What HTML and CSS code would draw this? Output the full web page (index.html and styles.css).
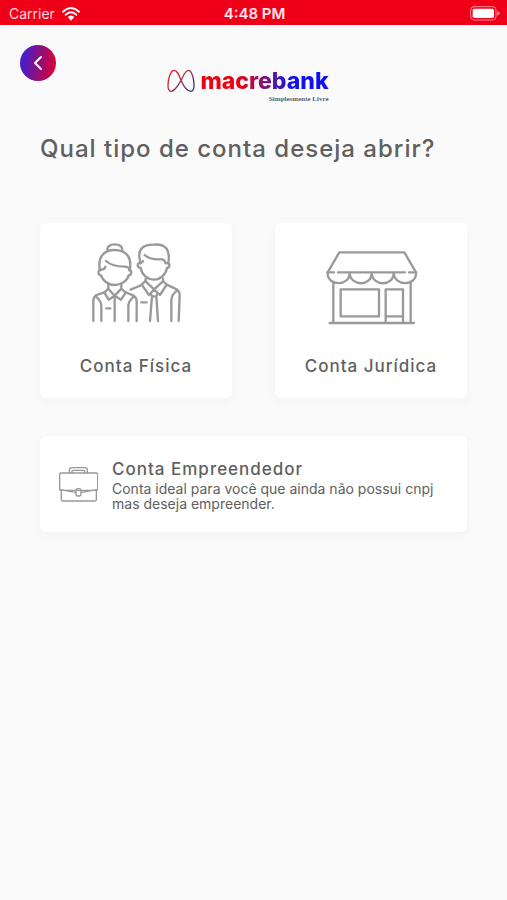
FILE: index.html
```html
<!DOCTYPE html>
<html lang="pt-BR">
<head>
<meta charset="utf-8">
<meta name="viewport" content="width=device-width, initial-scale=1">
<title>macrebank</title>
<link rel="stylesheet" href="styles.css">
</head>
<body>
<div class="status">
  <div class="carrier">
    <span>Carrier</span>
    <svg class="wifi" viewBox="0 0 54 42" aria-hidden="true">
      <path d="M3 14Q27-8 51 14" />
      <path d="M11 23Q27 9 43 23" />
      <path class="solid" d="M17 30Q27 21 37 30L27 41Z" />
    </svg>
  </div>
  <time class="clock">4:48 PM</time>
  <svg class="battery" viewBox="0 0 90 45" aria-hidden="true">
    <rect class="shell" x="2" y="2" width="76" height="40" rx="10" />
    <rect class="charge" x="8" y="8" width="64" height="28" rx="5" />
    <path class="tip" d="M82 15q7 3 7 7t-7 7z" />
  </svg>
</div>

<header class="top">
  <button class="back" type="button" aria-label="Voltar">
    <svg viewBox="0 0 36 36" aria-hidden="true"><path d="M21 12L15 18L21 24" /></svg>
  </button>
  <div class="brand">
    <div class="brand-row">
      <svg class="mark" viewBox="0 0 84 72" aria-hidden="true">
        <defs>
          <linearGradient id="mark-ink" x1="0" y1="0" x2="1" y2="1">
            <stop offset="0" stop-color="#f01820" />
            <stop offset=".4" stop-color="#b03848" />
            <stop offset="1" stop-color="#243080" />
          </linearGradient>
        </defs>
        <path d="M42 34C36 18 31 4 21 4C11 4 3 29 3 49C3 61 6 67 12 67C24 67 33 49 42 34C51 17 55 4 64 4C74 4 81 29 81 49C81 61 78 67 72 67C60 67 49 51 42 34Z" />
      </svg>
      <span class="wordmark">macrebank</span>
    </div>
    <span class="tagline">Simplesmente Livre</span>
  </div>
</header>

<main>
  <h1>Qual tipo de conta deseja abrir?</h1>
  <div class="options">
    <button class="card choice" type="button">
      <svg class="people" viewBox="30 35 276 243" aria-hidden="true">
        <path d="M82 59C82 46 92 42 104 42C117 42 127 47 127 59" />
        <path d="M60 120C52 82 70 59 104 59C140 59 157 83 149 120" />
        <path d="M78 92C91 104 116 109 135 109C143 109 147 111 148 119C157 121 155 134 146 135C143 151 124 164 105 164C86 164 67 151 63 135C53 134 54 121 60 118C69 119 75 117 76 109" />
        <path d="M85 161V175L104 196L124 175V161" />
        <path d="M84 176L73 187L86 208L104 196L123 208L137 187L125 176" />
        <path d="M73 186L53 193Q40 197 40 214V272M137 186L154 193Q170 198 170 214V272" />
        <path d="M48 199Q64 212 64 228V272M161 199Q145 213 145 228V272M104 198V272M79 234H91" />
        <path d="M182 99C170 61 184 43 220 43C260 39 271 61 265 99" />
        <path d="M194 74C207 88 230 88 247 87C254 87 254 94 257 99C271 94 271 111 261 113C257 134 241 148 222 148C202 148 186 134 182 113C171 112 170 98 180 98C187 98 188 95 189 92" />
        <path d="M197 145V153L222 177L249 153V145" />
        <path d="M196 152L185 163L207 194L222 178L240 194L260 163L249 152" />
        <path d="M185 164L152 178M260 163L284 174Q299 180 299 194L296 272" />
        <path d="M291 181Q274 194 274 210V272M184 216H200M213 190L216 198L210 272M232 190L229 198L234 272M216 198H229" />
      </svg>
      <span class="label">Conta Física</span>
    </button>
    <button class="card choice" type="button">
      <svg class="store" viewBox="30 30 279 225" aria-hidden="true">
        <path d="M38 97L73 37H268L303 97" />
        <path d="M38 97H57M69 97H270M282 97H303" />
        <path d="M38 97C35 140 104 140 104 99C106 140 170 140 170 99C172 140 236 140 236 99C238 140 306 140 303 97" />
        <path d="M55 126V248M287 126V248M44 249H297" />
        <rect x="77" y="148" width="115" height="81" />
        <path d="M212 248V148H264V248M212 229H264" />
      </svg>
      <span class="label">Conta Jurídica</span>
    </button>
    <button class="card wide" type="button">
      <svg class="briefcase" viewBox="87 125 117 105" aria-hidden="true">
        <path d="M118 143V135Q118 127 126 127H164Q172 127 172 135V143M126 143V138Q126 135 129 135H161Q164 135 164 138V143" />
        <rect x="89" y="143" width="114" height="52" rx="4" />
        <path d="M89 193L137 201M203 193L153 201M94 196V223Q94 227 98 227H195Q199 227 199 223V196" />
        <rect x="138" y="190" width="15" height="22" rx="6" />
      </svg>
      <span class="detail">
        <span class="label">Conta Empreendedor</span>
        <span class="note">Conta ideal para você que ainda não possui cnpj mas deseja empreender.</span>
      </span>
    </button>
  </div>
</main>
</body>
</html>
```
FILE: styles.css
```css
* {
  box-sizing: border-box;
}

body {
  margin: 0;
  min-height: 100vh;
  background: #fafafa;
  color: #606060;
  font-family: Inter, "Liberation Sans", sans-serif;
}

button {
  border: 0;
  padding: 0;
  color: inherit;
  font: inherit;
  cursor: pointer;
}

svg {
  display: block;
  fill: none;
  stroke-linecap: round;
  stroke-linejoin: round;
}

.status {
  display: grid;
  grid-template-columns: 1fr auto 1fr;
  align-items: center;
  height: 25px;
  padding: 2px 7px 0 9px;
  background: #f00018;
  color: #fff;
  font-size: 14px;
  line-height: 20px;
}

.carrier {
  display: flex;
  align-items: center;
  gap: 7px;
  color: #ffd9dc;
}

.clock {
  font-size: 15px;
  font-weight: 600;
  color: #ffe6e8;
}

.wifi {
  width: 18px;
  height: 14px;
  stroke: #fff;
  stroke-width: 6;
}

.wifi .solid {
  fill: #fff;
  stroke: none;
}

.battery {
  justify-self: end;
  width: 30px;
  height: 15px;
}

.battery .shell {
  stroke: #ff8a92;
  stroke-width: 3;
}

.battery .charge {
  fill: #fff;
}

.battery .tip {
  fill: #ff8a92;
}

.top {
  display: grid;
  grid-template-columns: 1fr auto 1fr;
  align-items: start;
  padding: 20px 31px 0 20px;
}

.back {
  width: 36px;
  height: 36px;
  border-radius: 50%;
  background: linear-gradient(100deg, #3a20dc 5%, #8a1080 50%, #e00030 95%);
}

.back svg {
  stroke: #fff;
  stroke-width: 2;
}

.brand {
  display: flex;
  flex-direction: column;
  padding-top: 22px;
}

.brand-row {
  display: flex;
  align-items: center;
  gap: 5px;
}

.mark {
  width: 28px;
  height: 24px;
  stroke: url(#mark-ink);
  stroke-width: 4;
}

.wordmark {
  background: linear-gradient(90deg, #f00010 30%, #681890 54%, #1010f0 72%);
  background-clip: text;
  -webkit-background-clip: text;
  color: transparent;
  font-size: 23px;
  font-weight: 800;
  line-height: 28px;
}

.tagline {
  align-self: flex-end;
  font-family: "Liberation Serif", serif;
  font-size: 7px;
  font-weight: 700;
  line-height: 8px;
}

main {
  padding: 0 40px 40px;
}

h1 {
  margin: 30px 0 58px;
  font-size: 24px;
  font-weight: 500;
  line-height: 32px;
  letter-spacing: 1px;
  white-space: nowrap;
}

.options {
  display: grid;
  grid-template-columns: 1fr 1fr;
  gap: 38px 43px;
}

.card {
  display: flex;
  border-radius: 6px;
  background: #fff;
  box-shadow: 0 4px 12px rgba(0, 0, 0, 0.03);
}

.choice {
  flex-direction: column;
  align-items: center;
  justify-content: space-between;
  min-height: 175px;
  padding: 19px 10px 20px;
}

.people,
.store {
  stroke: #999;
  stroke-width: 7;
}

.people {
  width: 92px;
  height: 81px;
}

.store {
  width: 93px;
  height: 75px;
  margin-top: 8px;
}

.label {
  font-size: 17px;
  font-weight: 500;
  line-height: 24px;
  letter-spacing: 1px;
}

.wide {
  grid-column: 1 / -1;
  align-items: center;
  gap: 14px;
  min-height: 96px;
  padding: 17px 19px;
  text-align: left;
}

.briefcase {
  flex: none;
  width: 39px;
  height: 35px;
  stroke: #999;
  stroke-width: 4;
}

.detail {
  display: flex;
  flex-direction: column;
}

.note {
  font-size: 14px;
  line-height: 15px;
}
```
